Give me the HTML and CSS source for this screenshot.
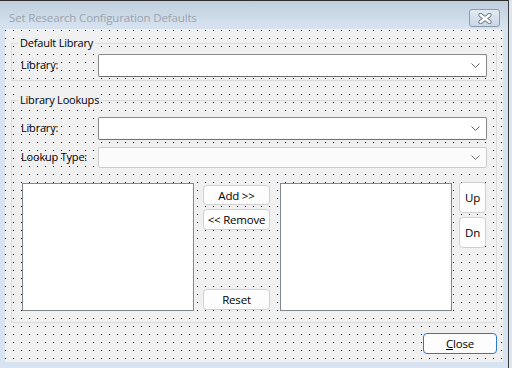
FILE: index.html
```html
<!DOCTYPE html>
<html lang="en">
<head>
  <meta charset="UTF-8">
  <title>Set Research Configuration Defaults</title>
  <link rel="stylesheet" href="styles.css">
</head>
<body>
  <div class="window">
    <div class="titlebar">
      <span class="title">Set Research Configuration Defaults</span>
      <button class="title-close" type="button">
        <svg width="14" height="11" viewBox="0 0 14 11">
          <path d="M2.5 2 L11.5 9 M11.5 2 L2.5 9" fill="none" stroke="#6b7888" stroke-width="4.2" stroke-linecap="round"/>
          <path d="M2.5 2 L11.5 9 M11.5 2 L2.5 9" fill="none" stroke="#ffffff" stroke-width="2.4" stroke-linecap="round"/>
        </svg>
      </button>
    </div>

    <div class="client">
      <!-- Default Library -->
      <fieldset class="group group-default">
        <legend>Default Library</legend>
        <div class="field">
          <label class="field-label">Library:</label>
          <div class="combo">
            <svg class="chevron" width="9" height="5" viewBox="0 0 9 5"><path d="M0.5 0.5 L4.5 4.5 L8.5 0.5" fill="none" stroke="#606060"/></svg>
          </div>
        </div>
      </fieldset>

      <!-- Library Lookups -->
      <fieldset class="group group-lookups">
        <legend>Library Lookups</legend>
        <div class="field">
          <label class="field-label">Library:</label>
          <div class="combo">
            <svg class="chevron" width="9" height="5" viewBox="0 0 9 5"><path d="M0.5 0.5 L4.5 4.5 L8.5 0.5" fill="none" stroke="#606060"/></svg>
          </div>
        </div>
        <div class="field field-second">
          <label class="field-label">Lookup Type:</label>
          <div class="combo combo-disabled">
            <svg class="chevron" width="9" height="5" viewBox="0 0 9 5"><path d="M0.5 0.5 L4.5 4.5 L8.5 0.5" fill="none" stroke="#707070"/></svg>
          </div>
        </div>

        <div class="lists">
          <div class="listbox listbox-left"></div>
          <div class="move-buttons">
            <button class="btn btn-add" type="button">Add &gt;&gt;</button>
            <button class="btn btn-remove" type="button">&lt;&lt; Remove</button>
            <button class="btn btn-reset" type="button">Reset</button>
          </div>
          <div class="listbox listbox-right"></div>
          <div class="order-buttons">
            <button class="btn btn-order" type="button">Up</button>
            <button class="btn btn-order" type="button">Dn</button>
          </div>
        </div>
      </fieldset>

      <div class="footer">
        <button class="btn btn-close" type="button"><u>C</u>lose</button>
      </div>
    </div>
  </div>
</body>
</html>
```

FILE: styles.css
```css
* {
  box-sizing: border-box;
}

body {
  margin: 0;
  width: 512px;
  height: 368px;
  background-color: #dde7f2;
  font-family: "Open Sans", "Noto Sans", sans-serif;
  font-size: 11px;
  letter-spacing: -0.2px;
  color: #000;
}

.window {
  width: 509px;
  height: 368px;
  background-color: #d7e3f0;
  border-top: 1px solid #2f2f2f;
  border-right: 1px solid #3a3a3a;
}

/* title bar */
.titlebar {
  display: flex;
  justify-content: space-between;
  align-items: flex-start;
  height: 28px;
  padding-left: 9px;
  padding-right: 8px;
  background: linear-gradient(#bfcede, #d8e4f0);
}

.title {
  margin-top: 9px;
  line-height: 16px;
  font-size: 11.5px;
  letter-spacing: -0.15px;
  color: #9aa3ad;
}

.title-close {
  display: flex;
  align-items: center;
  justify-content: center;
  width: 31px;
  height: 18px;
  margin-top: 8px;
  padding: 0;
  border: 1px solid #8c9cb0;
  border-radius: 3px;
  background: linear-gradient(#e2eaf3, #c9d6e4);
}

/* client area with designer grid */
.client {
  display: flex;
  flex-direction: column;
  height: 333px;
  margin: 0 5px;
  padding: 7px 6px 0 6px;
  background-color: #f0f0f0;
  background-image: conic-gradient(from 270deg at 1px 1px, #000 90deg, transparent 0);
  background-size: 8px 8px;
  background-position: 0 1px;
}

.group {
  margin: 0;
  min-width: 0;
  border: 1px solid #dcdcdc;
  padding: 4px 9px 3px 9px;
}

.group legend {
  margin-left: -3px;
  padding: 0 2px;
  line-height: 14px;
  background-color: #f0f0f0;
}

.group-lookups {
  margin-top: 12px;
  padding-top: 10px;
  padding-bottom: 11px;
}

.field {
  display: flex;
  align-items: center;
}

.field-second {
  margin-top: 7px;
}

.field-label {
  width: 77px;
  flex: none;
  padding-bottom: 2px;
}

.combo {
  flex: 1;
  display: flex;
  align-items: center;
  justify-content: flex-end;
  height: 23px;
  padding-right: 6px;
  border: 1px solid #8a8a8a;
  border-bottom-color: #6e6e6e;
  border-radius: 2px;
  background-color: #fff;
}

.combo-disabled {
  height: 21px;
  border-color: #cbcbcb;
  background-color: #fbfbfb;
}

/* list boxes and buttons */
.lists {
  display: flex;
  align-items: flex-start;
  margin-top: 14px;
}

.listbox {
  width: 172px;
  height: 128px;
  margin-top: 1px;
  border: 1px solid #828790;
  background-color: #fff;
}

.listbox-left {
  margin-left: 1px;
}

.move-buttons {
  display: flex;
  flex-direction: column;
  width: 67px;
  height: 129px;
  margin-left: 9px;
  margin-right: 10px;
}

.btn {
  padding: 0;
  border: 1px solid #d0d0d0;
  border-radius: 4px;
  background-color: #fdfdfd;
  font-family: inherit;
  font-size: 11.5px;
  letter-spacing: -0.2px;
  color: #000;
}

.btn-add {
  height: 20px;
  margin-top: 3px;
}

.btn-remove {
  height: 21px;
  margin-top: 4px;
}

.btn-reset {
  height: 21px;
  margin-top: auto;
  margin-bottom: 1px;
}

.order-buttons {
  display: flex;
  flex-direction: column;
  gap: 4px;
  margin-left: 7px;
}

.btn-order {
  width: 27px;
  height: 31px;
}

.footer {
  display: flex;
  justify-content: flex-end;
  margin-top: 10px;
}

.btn-close {
  width: 74px;
  height: 21px;
  border-color: #2a78cf;
}
```
